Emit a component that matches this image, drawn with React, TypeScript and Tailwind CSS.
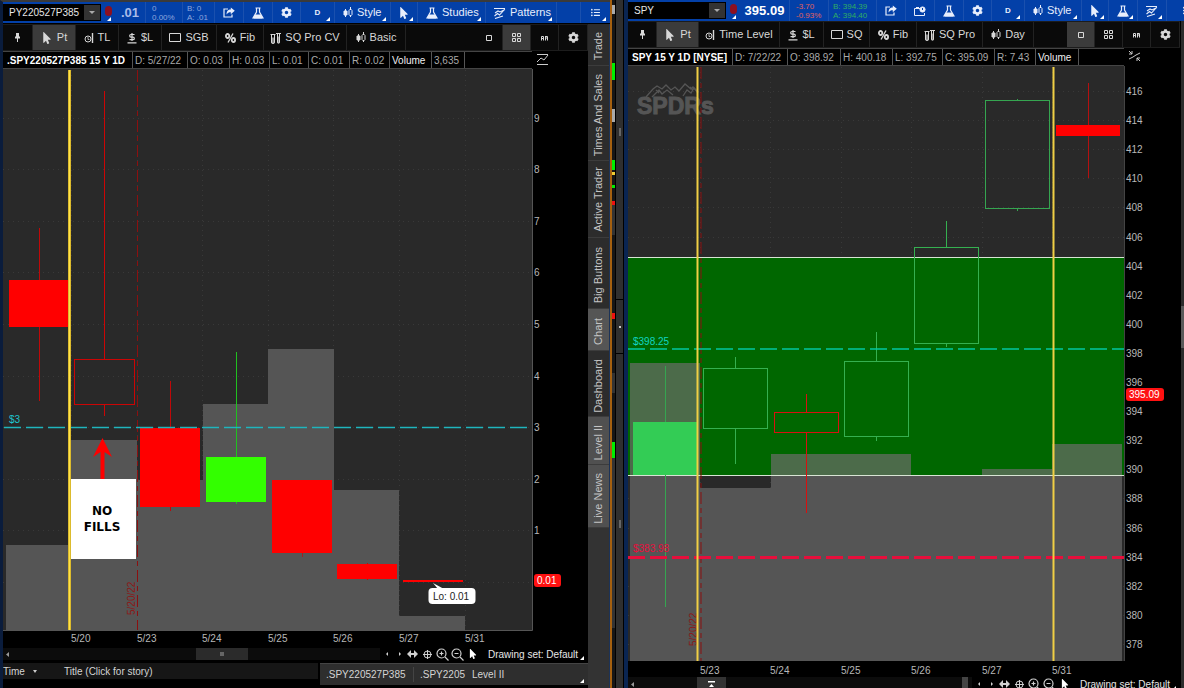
import type { ReactNode } from 'react'
import { FaCog, FaListUl, FaMousePointer } from 'react-icons/fa'

type IconName =
  | 'pin' | 'pointer' | 'level' | 'dollar' | 'rect' | 'percent' | 'tubes' | 'candles'
  | 'share' | 'flask' | 'gear' | 'patterns' | 'list' | 'calendar'
  | 'square' | 'grid' | 'ai'

function Icon({ name }: { name: IconName }) {
  switch (name) {
    case 'pin':
      return (
        <svg width="7" height="9" fill="currentColor">
          <path d="M2 0h3v3l1 1v1.5H1V4l1-1zM3 5.5h1V9H3z" />
        </svg>
      )
    case 'pointer':
      return <FaMousePointer size={12} />
    case 'percent':
      return (
        <svg width="11" height="10" fill="none" stroke="currentColor" strokeWidth="1.8">
          <ellipse cx="2.6" cy="3" rx="1.7" ry="2" />
          <ellipse cx="8.4" cy="7" rx="1.7" ry="2" />
          <path d="M8 .5L3 9.5" strokeWidth="1.3" />
        </svg>
      )
    case 'share':
      return (
        <svg width="12" height="11" fill="none" stroke="currentColor" strokeWidth="1.2">
          <path d="M5 2H1v8h8V7.5" />
          <path d="M11.8 3.8L7.8.4v2C5 2.5 3.4 4 3.6 7.6 4.6 5.6 5.8 5.2 7.8 5.2v2z" fill="currentColor" stroke="none" />
        </svg>
      )
    case 'gear':
      return <FaCog size={11} />
    case 'list':
      return <FaListUl size={9} />
    case 'level':
      return (
        <svg width="10" height="12" fill="none" stroke="currentColor">
          <circle cx="4" cy="7" r="3" />
          <path d="M4 5v2.5h1.5" strokeWidth="0.8" />
          <path d="M8.5 1v10" strokeWidth="1.4" />
        </svg>
      )
    case 'dollar':
      return (
        <svg width="10" height="12" fill="none" stroke="currentColor" strokeWidth="1.2">
          <path d="M7.5 2.5H4a1.3 1.3 0 0 0 0 2.6h2a1.3 1.3 0 0 1 0 2.6H2.5M5 1v8M0.5 10.8h9" />
        </svg>
      )
    case 'rect':
      return (
        <svg width="12" height="10" fill="none" stroke="currentColor">
          <path d="M.5 .5h11v8H.5z" />
        </svg>
      )
    case 'tubes':
      return (
        <svg width="11" height="12" fill="none" stroke="currentColor">
          <path d="M.5 2.5h5M1.5 3v7a1 1 0 0 0 3 0V3M6 1.5h5M7.5 2v8a1 1 0 0 0 2 0V2" />
          <path d="M1.5 6h3v5h-3zM7.5 5h2v6h-2z" fill="currentColor" opacity=".6" />
        </svg>
      )
    case 'candles':
      return (
        <svg width="10" height="11" stroke="currentColor" fill="none">
          <path d="M2.5 2v8M7.5 0v3M7.5 8v2" />
          <path d="M1 4h3v4H1z" fill="currentColor" />
          <path d="M6 3.5L7.5 2 9 3.5v4L7.5 9 6 7.5z" />
        </svg>
      )
    case 'flask':
      return (
        <svg width="12" height="12" stroke="currentColor" fill="none">
          <path d="M3.5 1h5M4.5 1v4L1 11h10L7.5 5V1" strokeWidth="1.2" />
          <path d="M3.2 8h5.6l1.5 3H1.7z" fill="currentColor" />
        </svg>
      )
    case 'patterns':
      return (
        <svg width="12" height="12" stroke="currentColor" fill="none" strokeWidth="1.1">
          <path d="M0 1.5h11M1 6l3-2 2 1 5-2.5M.5 9l3-2.5 2 1.5 5-5.5M1 11.5l8-2.5" />
        </svg>
      )
    case 'calendar':
      return (
        <svg width="12" height="10" stroke="currentColor" fill="none">
          <path d="M6 2.5H.5v7h10V7M2 1.5h3" />
          <circle cx="8.5" cy="3.5" r="2.6" fill="currentColor" />
          <path d="M8.5 2v2" stroke="#0340a8" />
        </svg>
      )
    case 'square':
      return (
        <svg width="8" height="8" fill="none" stroke="currentColor">
          <path d="M1.5 1.5h5v5h-5z" />
        </svg>
      )
    case 'grid':
      return (
        <svg width="9" height="9" fill="none" stroke="currentColor">
          <path d="M.5 .5h3v3h-3zM5.5 .5h3v3h-3zM.5 5.5h3v3h-3zM5.5 5.5h3v3h-3z" />
        </svg>
      )
    case 'ai':
      return (
        <svg width="7" height="6" fill="none" stroke="currentColor">
          <path d="M.5 5.5v-4h2v4M.5 3.5h2M4.5 1v4.5M4.5 1.5h2V3h-2M6.5 3v2.5" />
        </svg>
      )
  }
}

function Corner() {
  return (
    <svg width="4" height="4" className="absolute right-1 bottom-0.5" fill="#fff">
      <path d="M4 0v4H0z" />
    </svg>
  )
}

interface Cell {
  icon?: IconName
  label?: string
  title?: string
  width: string
  menu?: boolean
  active?: boolean
}

function TopButton({ icon, label, title, width, menu }: Cell) {
  return (
    <button
      aria-label={title ?? label}
      className={`relative flex shrink-0 items-center border-l border-[#1a50ae] text-[11px] ${width} ${label && icon ? 'gap-1 pl-2' : 'justify-center'}`}
    >
      {icon && <Icon name={icon} />}
      {label && <span className={icon ? '' : 'text-[8px] font-bold'}>{label}</span>}
      {menu && <Corner />}
    </button>
  )
}

function ToolButton({ icon, label, title, width, active }: Cell) {
  return (
    <button
      aria-label={title ?? label}
      className={`flex shrink-0 items-center justify-center gap-1 border-r border-[#222] text-[11px] whitespace-nowrap ${width} ${active ? 'bg-[#3b3b3b]' : ''}`}
    >
      {icon && <Icon name={icon} />}
      {label && <span>{label}</span>}
    </button>
  )
}

interface Quote {
  symbol: string
  price: string
  priceWidth: string
  priceColor: string
  change: [string, string]
  changeWidth: string
  changeColor: string
  book: [string, string]
  bookWidth: string
  bookColor: string
}

function TopBar({ quote, cells, children }: { quote: Quote; cells: Cell[]; children?: ReactNode }) {
  return (
    <div className="flex h-[21px] shrink-0 items-stretch overflow-hidden bg-[#0340a8] text-[#e8eefc]">
      <input
        aria-label={`Symbol ${quote.symbol}`}
        defaultValue={quote.symbol}
        className="my-0.5 w-20 shrink-0 bg-black pl-1.5 text-[10px] text-[#e6e6e6] outline-none"
      />
      <button aria-label="Symbol list" className="my-0.5 flex w-[18px] shrink-0 items-center justify-center border border-black bg-[#333]">
        <svg width="6" height="3" fill="#aaa">
          <path d="M0 0h6L3 3z" />
        </svg>
      </button>
      <div className="relative flex w-3.5 shrink-0 justify-center pt-1">
        <span className="h-2.5 w-[7px] rounded-sm bg-[#8c1020]" />
        <Corner />
      </div>
      <div className={`flex shrink-0 items-center justify-center text-[13px] font-bold ${quote.priceWidth} ${quote.priceColor}`}>{quote.price}</div>
      <div className={`flex shrink-0 flex-col justify-center border-l border-[#1a50ae] pl-1.5 text-[8px] leading-[9px] ${quote.changeWidth} ${quote.changeColor}`}>
        {quote.change.map((t) => (
          <span key={t}>{t}</span>
        ))}
      </div>
      <div className={`flex shrink-0 flex-col justify-center border-l border-[#1a50ae] pl-1 text-[8px] leading-[9px] whitespace-nowrap ${quote.bookWidth} ${quote.bookColor}`}>
        {quote.book.map((t) => (
          <span key={t}>{t}</span>
        ))}
      </div>
      {cells.map((c, i) => (
        <TopButton key={i} {...c} />
      ))}
      {children}
    </div>
  )
}

function ToolBar({ tools, views }: { tools: Cell[]; views: Cell[] }) {
  return (
    <div className="flex h-[27px] items-stretch overflow-hidden border-y border-[#1c1c1c] bg-[#0a0a0a] text-[#d8d8d8]">
      {tools.map((c, i) => (
        <ToolButton key={i} {...c} />
      ))}
      <div className="flex-1" />
      {views.map((c, i) => (
        <ToolButton key={i} {...c} />
      ))}
    </div>
  )
}

function InfoRow({ title, titleWidth, items, icon }: { title: string; titleWidth: string; items: [string, string][]; icon: ReactNode }) {
  return (
    <div className="flex h-[18px] items-stretch bg-black text-[10px] whitespace-nowrap text-[#a9a9a9]">
      <div className="flex min-w-0 flex-1 items-stretch overflow-hidden border-y border-[#444]">
        <div className={`flex shrink-0 items-center border-r border-[#555] pl-1 font-bold text-white ${titleWidth}`}>{title}</div>
        {items.map(([text, width]) => (
          <div
            key={text}
            className={`flex shrink-0 items-center border-r border-[#555] pl-0.5 ${width} ${text === 'Volume' ? 'text-[#f0f0f0]' : ''}`}
          >
            {text}
          </div>
        ))}
      </div>
      <div className="w-14 shrink-0 pt-0.5 pl-1">{icon}</div>
    </div>
  )
}

interface Candle {
  x: number
  w: number
  top: number
  bottom: number
  high: number
  low: number
  color: string
  wick: string
  filled?: boolean
}

function CandleShape({ x, w, top, bottom, high, low, color, wick, filled }: Candle) {
  const cx = x + Math.floor(w / 2) + 0.5
  return (
    <g>
      <path d={`M${cx} ${high}V${top}M${cx} ${bottom}V${low}`} stroke={wick} />
      {filled ? (
        <rect x={x} y={top} width={w} height={bottom - top} fill={color} />
      ) : (
        <rect x={x + 0.5} y={top + 0.5} width={w - 1} height={bottom - top - 1} fill="none" stroke={color} />
      )}
    </g>
  )
}

const PUT_CANDLES: Candle[] = [
  { x: 9, w: 60, top: 280, bottom: 327, high: 228, low: 401, color: '#ff0000', wick: '#c00808', filled: true },
  { x: 74, w: 61, top: 359, bottom: 405, high: 91, low: 416, color: '#cc0505', wick: '#cc0505' },
  { x: 140, w: 60, top: 428, bottom: 507, high: 381, low: 511, color: '#ff0000', wick: '#c00808', filled: true },
  { x: 206, w: 60, top: 457, bottom: 502, high: 352, low: 504, color: '#33ff00', wick: '#20c020', filled: true },
  { x: 272, w: 60, top: 480, bottom: 553, high: 480, low: 557, color: '#ff0000', wick: '#a02020', filled: true },
  { x: 337, w: 60, top: 564, bottom: 579, high: 563, low: 580, color: '#ff0000', wick: '#c00808', filled: true },
  { x: 403, w: 60, top: 580, bottom: 582, high: 580, low: 582, color: '#ff0000', wick: '#c00808', filled: true },
]

const PUT_VOLUME = [
  [6, 65, 545], [71, 66, 440], [137, 66, 480], [203, 65, 404],
  [268, 66, 349], [334, 65, 490], [399, 66, 616],
]

const SPY_CANDLES: Candle[] = [
  { x: 633, w: 64, top: 422, bottom: 475, high: 366, low: 607, color: '#33cc55', wick: '#35a550', filled: true },
  { x: 703, w: 65, top: 368, bottom: 429, high: 357, low: 464, color: '#35b050', wick: '#35b050' },
  { x: 774, w: 65, top: 412, bottom: 433, high: 394, low: 513, color: '#d81010', wick: '#d81010' },
  { x: 844, w: 65, top: 361, bottom: 437, high: 332, low: 441, color: '#35b050', wick: '#35b050' },
  { x: 914, w: 65, top: 247, bottom: 344, high: 221, low: 347, color: '#35b050', wick: '#35b050' },
  { x: 985, w: 65, top: 100, bottom: 209, high: 99, low: 211, color: '#35a550', wick: '#35a550' },
  { x: 1056, w: 64, top: 125, bottom: 136, high: 83, low: 178, color: '#ff0000', wick: '#b41010', filled: true },
]

const SPY_VOLUME = [
  [630, 70, 363], [700, 71, 488], [771, 140, 454], [911, 71, 476], [982, 70, 469], [1052, 70, 444],
]

const PUT_DATES = ['5/20', '5/23', '5/24', '5/25', '5/26', '5/27', '5/31']
const SPY_DATES = ['5/23', '5/24', '5/25', '5/26', '5/27', '5/31']

function PutChart() {
  const prices = [9, 8, 7, 6, 5, 4, 3, 2, 1]
  const yOf = (p: number) => Math.round(582 - p * 51.6)
  const xOf = (i: number) => Math.round(71 + i * 65.6)
  return (
    <svg viewBox="3 69 585 578" className="block w-full bg-black text-[10px]" role="img" aria-label="SPY220527P385 chart">
      <rect x="3" y="69" width="530" height="561" fill="#292929" />
      <g stroke="#393939" strokeDasharray="1 4">
        {[...prices, 0].map((p) => (
          <path key={p} d={`M3 ${yOf(p) + 0.5}H532`} />
        ))}
        {PUT_DATES.map((d, i) => (
          <path key={d} d={`M${xOf(i) + 0.5} 70V630`} />
        ))}
      </g>
      {PUT_VOLUME.map(([x, w, y]) => (
        <rect key={x} x={x} y={y} width={w} height={630 - y} fill="#555" />
      ))}
      <path d="M532.5 69V630.5H3" fill="none" stroke="#555" />
      <path d="M137.5 70V630" stroke="#8b1010" strokeDasharray="12 4 5 4" />
      <text transform="translate(135 615) rotate(-90)" fill="#8b1a1a">5/20/22</text>
      {PUT_CANDLES.map((c) => (
        <CandleShape key={c.x} {...c} />
      ))}
      <path d="M4 427.5H532" stroke="#1fb5bd" strokeDasharray="17 5" strokeWidth="1.4" />
      <text x="9" y="423" fill="#1fc5cd">$3</text>
      <path d="M69.5 70V630" stroke="#b89410" strokeWidth="3" />
      <path d="M69.5 70V630" stroke="#ffe24a" strokeWidth="2" />

      <path d="M102.5 438l9.5 19-7.5-5v27h-4v-27l-7.5 5z" fill="#f00" />
      <rect x="71" y="479" width="65" height="80" fill="#fff" />
      <text textAnchor="middle" fill="#000" className="font-['DejaVu_Sans'] text-[12px] font-bold">
        <tspan x="102" y="515">NO</tspan>
        <tspan x="102" y="531">FILLS</tspan>
      </text>

      <path d="M433 583l5 6h6z" fill="#fff" />
      <rect x="428.5" y="588" width="47" height="16" rx="4" fill="#fff" />
      <text x="433" y="600" fill="#222" className="text-[10px]">Lo: 0.01</text>

      <g fill="#b8b8b8">
        {prices.map((p) => (
          <text key={p} x="534" y={yOf(p) + 4}>{p}</text>
        ))}
        {PUT_DATES.map((d, i) => (
          <text key={d} x={xOf(i)} y="642">{d}</text>
        ))}
      </g>
      <rect x="534" y="574" width="27" height="13" rx="3" fill="#f11" />
      <text x="537" y="584" fill="#fff">0.01</text>
    </svg>
  )
}

function SpyChart() {
  const prices = Array.from({ length: 20 }, (_, i) => 416 - i * 2)
  const yOf = (p: number) => Math.round(91 + (416 - p) * 14.55)
  const xOf = (i: number) => Math.round(700 + i * 70.4)
  return (
    <svg viewBox="628 66 552 611" className="block w-full bg-black text-[10px]" role="img" aria-label="SPY chart">
      <rect x="628" y="66" width="496" height="595" fill="#292929" />
      <g stroke="#393939" strokeDasharray="1 4">
        {prices.map((p) => (
          <path key={p} d={`M628 ${yOf(p) + 0.5}H1124`} />
        ))}
        {SPY_DATES.map((d, i) => (
          <path key={d} d={`M${xOf(i) + 0.5} 67V661`} />
        ))}
      </g>
      <g fill="none" stroke="#555" strokeWidth="1.3">
        <path d="M646 97l7-8 4-3 5 3 4-4 5 5 4-3 4 4 6-7 6 5 2-2 5 5" />
        <path d="M652 97l7-7 3 4 5-4 6 5M683 96l4-6 4 3 3-5 4 5M656 90l3 3M690 87l3 3" />
      </g>
      <text x="637" y="114" fill="#555" stroke="#555" className="text-[23px] font-bold">SPDRs</text>

      <rect x="628" y="257" width="496" height="219" fill="#006700" />
      {SPY_VOLUME.map(([x, w, y]) => (
        <g key={x}>
          {y < 476 && <rect x={x} y={y} width={w} height={476 - y} fill="#4c6b4a" />}
          <rect x={x} y={Math.max(y, 476)} width={w} height={661 - Math.max(y, 476)} fill="#555" />
        </g>
      ))}
      <path d="M628 257.5H1124M628 475.5H1124" stroke="#d8e4d4" />
      <path d="M1124.5 66V661" fill="none" stroke="#444" />
      <path d="M701 67V661" stroke="#8b1010" strokeDasharray="12 4 5 4" />
      <text transform="translate(697 646) rotate(-90)" fill="#8b1a1a">5/20/22</text>
      {SPY_CANDLES.map((c) => (
        <CandleShape key={c.x} {...c} />
      ))}
      <path d="M628 349H1124" stroke="#00c8a0" strokeDasharray="17 5" strokeWidth="1.4" />
      <text x="633" y="345" fill="#10d5c0">$398.25</text>
      <path d="M628 557.5H1124" stroke="#e60f3c" strokeDasharray="17 5" strokeWidth="3" />
      <text x="633" y="552" fill="#e60f3c">$383.98</text>
      <path d="M697.5 67V661M1053.5 67V661" stroke="#f0cf45" strokeWidth="2" />

      <g fill="#b8b8b8">
        {prices.map((p) => (
          <text key={p} x="1126" y={yOf(p) + 4}>{p}</text>
        ))}
        {SPY_DATES.map((d, i) => (
          <text key={d} x={xOf(i)} y="674">{d}</text>
        ))}
      </g>
      <rect x="1126" y="388" width="38" height="13" rx="3" fill="#f11" />
      <text x="1129" y="398" fill="#fff">395.09</text>
    </svg>
  )
}

const CHART_CONTROLS: [string, string][] = [
  ['Scroll left', 'M8 4L6 6l2 2z'],
  ['Scroll right', 'M6 4l2 2-2 2z'],
  ['Expand', 'M1 6l4-4v3h3V2l4 4-4 4V7H5v3z'],
]

function BottomControls() {
  return (
    <div className="flex shrink-0 items-center text-[#d0d0d0]">
      {CHART_CONTROLS.map(([title, d]) => (
        <button key={title} aria-label={title} className="flex w-[13px] justify-center">
          <svg width="13" height="12" fill="currentColor">
            <path d={d} />
          </svg>
        </button>
      ))}
      <button aria-label="Crosshair" className="flex w-4 justify-center">
        <svg width="11" height="11" fill="none" stroke="currentColor">
          <circle cx="5.5" cy="5.5" r="3.5" />
          <path d="M5.5 1v9M1 5.5h9" />
        </svg>
      </button>
      {['Zoom in', 'Zoom out'].map((title) => (
        <button key={title} aria-label={title} className="flex w-[15px] justify-center">
          <svg width="13" height="13" fill="none" stroke="currentColor" strokeWidth="1.2">
            <circle cx="5.5" cy="5.5" r="4.5" />
            <path d="M9 9l3.5 3.5M3.5 5.5h4" />
            {title === 'Zoom in' && <path d="M5.5 3.5v4" />}
          </svg>
        </button>
      ))}
      <button aria-label="Pointer" className="flex w-[15px] justify-center text-white">
        <FaMousePointer size={10} />
      </button>
      <button className="relative h-full w-[108px] pl-2 text-left text-[10px] whitespace-nowrap text-[#e6e6e6]">
        Drawing set: Default
        <Corner />
      </button>
    </div>
  )
}

const ARROW_LEFT = (
  <svg width="5" height="5" className="ml-0.5" fill="#999">
    <path d="M4 0v5L1 2.5z" />
  </svg>
)

const SIDE_TABS = [
  ['Trade', 'h-[42px] pt-1 bg-[#2c2c2c]'],
  ['Times And Sales', 'h-[95px] pt-1 bg-[#2c2c2c]'],
  ['Active Trader', 'h-[77px] bg-[#2c2c2c]'],
  ['Big Buttons', 'h-[71px] pt-1 bg-[#2c2c2c]'],
  ['Chart', 'h-[42px] pt-1 bg-[#555]'],
  ['Dashboard', 'h-[66px] pt-1 bg-[#2c2c2c]'],
  ['Level II', 'h-[48px] pt-1 bg-[#505050]'],
  ['Live News', 'h-[63px] pt-1 bg-[#505050]'],
]

function LeftPanel() {
  return (
    <section className="flex min-w-0 flex-col overflow-hidden border-t-2 border-l-3 border-t-[#3a3a3a] border-l-[#0a1c3c]">
      <TopBar
        quote={{
          symbol: 'PY220527P385', price: '.01', priceWidth: 'w-[30px]', priceColor: 'text-[#a9bce8]',
          change: ['0', '0.00%'], changeWidth: 'w-[37px]', changeColor: 'text-[#8ea6dd]',
          book: ['B: 0', 'A: .01'], bookWidth: 'w-[32px]', bookColor: 'text-[#8ea6dd]',
        }}
        cells={[
          { icon: 'share', title: 'Share', width: 'w-[29px]' },
          { icon: 'flask', title: 'Edit studies', width: 'w-[29px]' },
          { icon: 'gear', title: 'Settings', width: 'w-[28px]' },
          { label: 'D', width: 'w-[34px]', menu: true },
          { icon: 'candles', label: 'Style', width: 'w-[56px]', menu: true },
          { icon: 'pointer', title: 'Drawings', width: 'w-[27px]', menu: true },
          { icon: 'flask', label: 'Studies', width: 'w-[68px]', menu: true },
          { icon: 'patterns', label: 'Patterns', width: 'w-[71px]', menu: true },
        ]}
      >
        <div className="flex-1 border-l border-[#1a50ae]" />
        <TopButton icon="list" title="Menu" width="w-[30px]" menu />
      </TopBar>
      <div className="flex flex-1 items-stretch border-t border-black">
        <div className="min-w-0 flex-1">
          <ToolBar
            tools={[
              { icon: 'pin', title: 'Pin', width: 'w-[30px]' },
              { icon: 'pointer', label: 'Pt', width: 'w-[43px]', active: true },
              { icon: 'level', label: 'TL', width: 'w-[43px]' },
              { icon: 'dollar', label: '$L', width: 'w-[43px]' },
              { icon: 'rect', label: 'SGB', width: 'w-[55px]' },
              { icon: 'percent', label: 'Fib', width: 'w-[47px]' },
              { icon: 'tubes', label: 'SQ Pro CV', width: 'w-[83px]' },
              { icon: 'candles', label: 'Basic', width: 'w-[59px]' },
            ]}
            views={[
              { icon: 'square', title: 'Single chart', width: 'w-[28px]' },
              { icon: 'grid', title: 'Chart grid', width: 'w-[28px]', active: true },
              { icon: 'ai', title: 'Layout', width: 'w-[28px]' },
              { icon: 'gear', title: 'Chart settings', width: 'w-[29px]' },
            ]}
          />
          <InfoRow
            title=".SPY220527P385 15 Y 1D"
            titleWidth="w-[130px]"
            items={[
              ['D: 5/27/22', 'w-[55px]'],
              ['O: 0.03', 'w-[42px]'],
              ['H: 0.03', 'w-[40px]'],
              ['L: 0.01', 'w-[39px]'],
              ['C: 0.01', 'w-[41px]'],
              ['R: 0.02', 'w-[40px]'],
              ['Volume', 'w-[42px]'],
              ['3,635', 'w-[33px]'],
            ]}
            icon={
              <svg width="13" height="13" fill="none" stroke="#ccc">
                <path d="M1 1.5h11M1 11.5h11M1 9l4-4 3 2 4-5" />
              </svg>
            }
          />
          <PutChart />
          <div className="flex h-3.5 items-center bg-black">
            <div className="flex h-3 min-w-0 flex-1 items-center bg-[#0c0c0c]">
              {ARROW_LEFT}
              <div className="ml-auto flex h-3 w-[52px] items-center justify-center bg-[#2b2b2b]">
                <span className="size-1 bg-[#666]" />
              </div>
              <div className="w-[132px]" />
            </div>
            <BottomControls />
          </div>
          <div className="mt-0.5 flex items-start text-[10px] text-[#d4d4d4]">
            <div className="flex h-4 min-w-0 flex-1 items-center bg-[#161616]">
              <button className="flex w-[61px] items-center gap-2">
                Time
                <svg width="4" height="3" fill="#ccc">
                  <path d="M0 0h4L2 3z" />
                </svg>
              </button>
              <span>Title (Click for story)</span>
            </div>
            <div className="relative ml-0.5 flex h-[22px] w-[268px] items-center border-t border-[#444] bg-[#2e2e2e]">
              <span className="w-[94px] border-r border-[#444] pl-1.5">.SPY220527P385</span>
              <span className="w-[58px] pl-1.5">.SPY2205</span>
              <span>Level II</span>
              <Corner />
            </div>
          </div>
        </div>
        <nav className="flex w-[22px] flex-col border-r border-[#1c3358] bg-[#333]">
          {SIDE_TABS.map(([label, style]) => (
            <button key={label} className={`flex w-full shrink-0 items-center justify-center border-b border-[#3c3c3c] text-[11px] text-[#c4c4c4] ${style}`}>
              <span className="rotate-180 whitespace-nowrap [writing-mode:vertical-rl]">{label}</span>
            </button>
          ))}
        </nav>
      </div>
    </section>
  )
}

function Splitter() {
  return (
    <div className="flex">
      <div className="w-0.5 bg-[#a5600f]" />
      <div className="w-[3px] bg-[#161616]">
        <svg width="3" height="688" className="block">
          <path d="M0 63h3v17H0zM0 160h3v10H0zM0 185h3v3H0zM0 442h3v16H0z" fill="#0e0" />
          <path d="M0 172h3v3H0z" fill="#ec3" />
          <path d="M0 201h3v4H0zM0 313h3v6H0z" fill="#e11" />
          <path d="M0 109h3v13H0zM0 5h3v9H0z" fill="#aaa" />
          <path d="M0 205h3v30H0zM0 373h3v20H0zM0 458h3v170H0z" fill="#333" />
        </svg>
      </div>
      <div className="flex w-[9px] flex-col border-x border-black bg-[#2f2f2f]">
        <div className="h-[300px] border-b border-black pt-32">
          <div className="mx-auto h-2 w-0.5 bg-[#666]" />
        </div>
        <div className="flex h-[54px] items-center justify-center border-b border-black">
          <span className="h-0.5 w-0.5 bg-[#ccc]" />
        </div>
        <div className="flex-1 pt-[166px]">
          <div className="mx-auto h-2 w-0.5 bg-[#666]" />
        </div>
      </div>
    </div>
  )
}

function RightPanel() {
  return (
    <section className="flex min-w-0 flex-col overflow-hidden border-l-4 border-[#0a2552]">
      <TopBar
        quote={{
          symbol: 'SPY', price: '395.09', priceWidth: 'w-[49px]', priceColor: 'text-white',
          change: ['-3.70', '-0.93%'], changeWidth: 'w-[39px]', changeColor: 'text-[#e0605c]',
          book: ['B: 394.39', 'A: 394.40'], bookWidth: 'w-[48px]', bookColor: 'text-[#2fae62]',
        }}
        cells={[
          { icon: 'share', title: 'Share', width: 'w-[29px]' },
          { icon: 'calendar', title: 'Events', width: 'w-[29px]' },
          { icon: 'flask', title: 'Edit studies', width: 'w-[29px]' },
          { icon: 'gear', title: 'Settings', width: 'w-[28px]' },
          { label: 'D', width: 'w-[33px]', menu: true },
          { icon: 'candles', label: 'Style', width: 'w-[57px]', menu: true },
          { icon: 'pointer', title: 'Drawings', width: 'w-[27px]', menu: true },
          { icon: 'flask', title: 'Studies', width: 'w-[29px]', menu: true },
          { icon: 'patterns', title: 'Patterns', width: 'w-[29px]', menu: true },
          { icon: 'list', title: 'Menu', width: 'w-[42px]' },
        ]}
      />
      <div className="flex flex-1 items-stretch">
        <div className="min-w-0 flex-1">
          <ToolBar
            tools={[
              { icon: 'pin', title: 'Pin', width: 'w-[29px]' },
              { icon: 'pointer', label: 'Pt', width: 'w-[42px]', active: true },
              { icon: 'level', label: 'Time Level', width: 'w-[81px]' },
              { icon: 'dollar', label: '$L', width: 'w-[44px]' },
              { icon: 'rect', label: 'SQ', width: 'w-[46px]' },
              { icon: 'percent', label: 'Fib', width: 'w-[47px]' },
              { icon: 'tubes', label: 'SQ Pro', width: 'w-[66px]' },
              { icon: 'candles', label: 'Day', width: 'w-[51px]' },
            ]}
            views={[
              { icon: 'square', title: 'Single chart', width: 'w-[28px]', active: true },
              { icon: 'grid', title: 'Chart grid', width: 'w-[28px]' },
              { icon: 'ai', title: 'Layout', width: 'w-[28px]' },
              { icon: 'gear', title: 'Chart settings', width: 'w-[29px]' },
            ]}
          />
          <InfoRow
            title="SPY 15 Y 1D [NYSE]"
            titleWidth="w-[105px]"
            items={[
              ['D: 7/22/22', 'w-[55px]'],
              ['O: 398.92', 'w-[53px]'],
              ['H: 400.18', 'w-[52px]'],
              ['L: 392.75', 'w-[50px]'],
              ['C: 395.09', 'w-[52px]'],
              ['R: 7.43', 'w-[41px]'],
              ['Volume', 'w-[43px]'],
            ]}
            icon={
              <svg width="13" height="13" fill="none" stroke="#ccc">
                <path d="M1 1l3 3M4 1v3H1M12 11L9 8M9 11V8h3M1 9l4-2 3-2 4-2" />
              </svg>
            }
          />
          <SpyChart />
          <div className="flex h-3.5 items-center bg-black">
            <div className="flex h-full min-w-0 flex-1 items-center bg-[#0c0c0c]">
              {ARROW_LEFT}
              <div className="ml-[62px] flex h-full w-[29px] items-center justify-center bg-[#333]">
                <svg width="7" height="7" fill="#fff">
                  <path d="M0 0h7v1.5H0zM3.5 3L6 6H1z" />
                </svg>
              </div>
              <div className="mr-1 ml-auto h-full w-1.5 bg-[#444]" />
            </div>
            <BottomControls />
          </div>
        </div>
        <div className="w-1 border-l border-black bg-[#2c2c2c] pt-[285px]">
          <div className="h-[42px] bg-[#5a5a5a]" />
        </div>
      </div>
    </section>
  )
}

export default function App() {
  return (
    <main className="grid h-screen grid-cols-[minmax(0,610fr)_14px_minmax(0,560fr)] overflow-hidden bg-black font-['Liberation_Sans',Arial,sans-serif]">
      <LeftPanel />
      <Splitter />
      <RightPanel />
    </main>
  )
}
